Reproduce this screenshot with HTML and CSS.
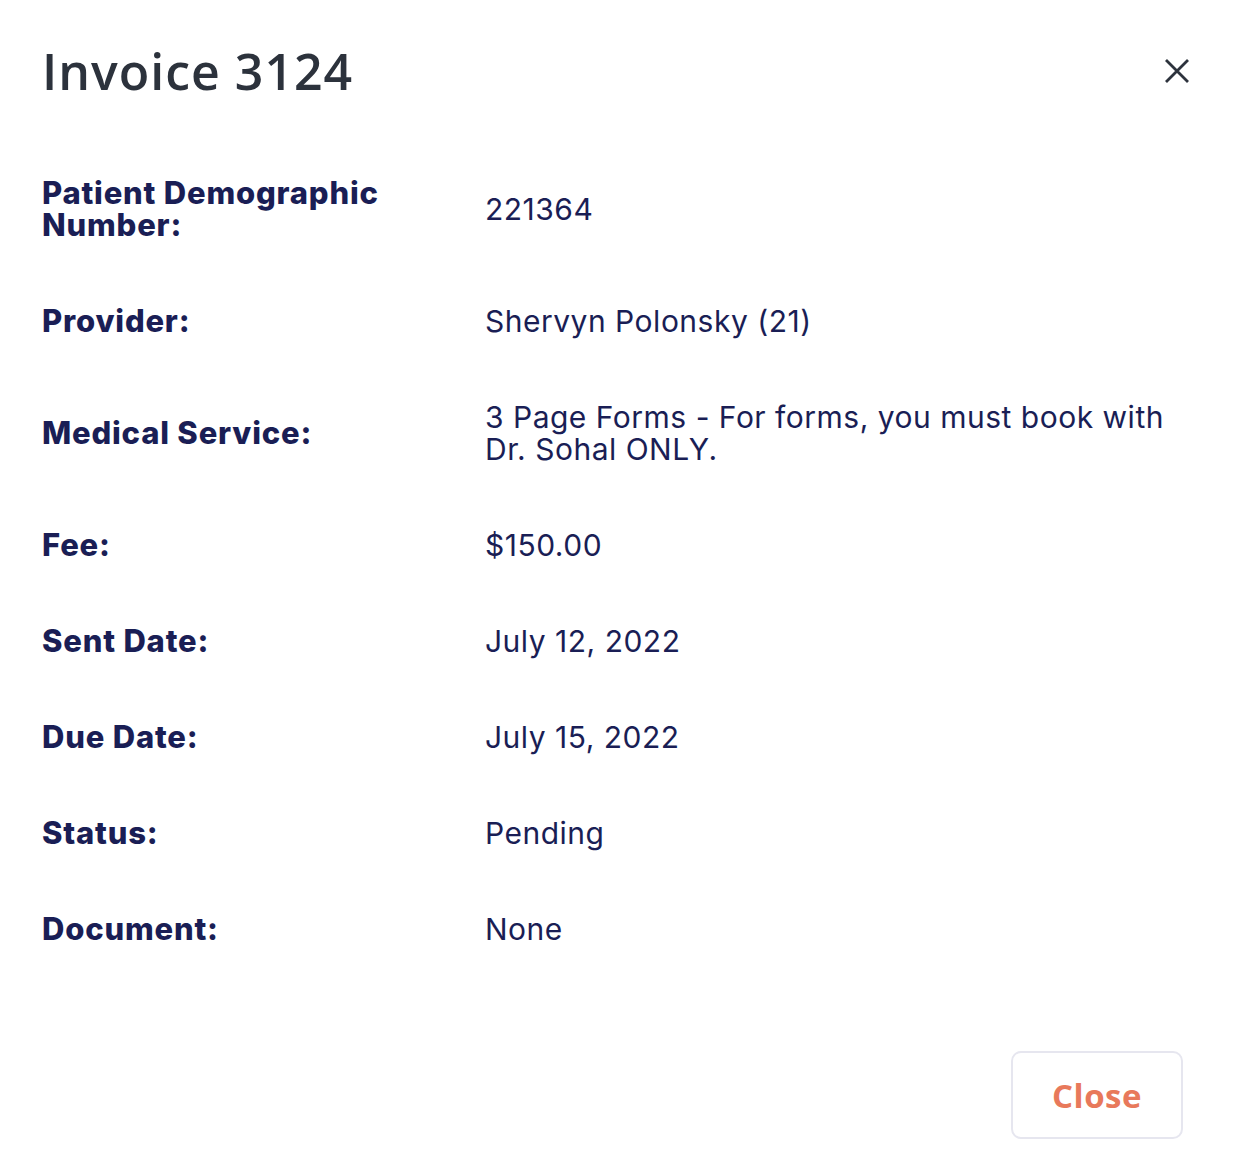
FILE: index.html
```html
<!DOCTYPE html>
<html lang="en">
<head>
<meta charset="utf-8">
<title>Invoice 3124</title>
<link rel="stylesheet" href="styles.css">
</head>
<body>
<div class="modal">
  <div class="header">
    <h1 class="title">Invoice 3124</h1>
    <button class="icon-close" aria-label="Close">
      <svg width="26" height="26" viewBox="0 0 26 26"><path d="M2 2 L24 24 M24 2 L2 24" stroke="#2d333d" stroke-width="2.8" stroke-linecap="butt" fill="none"/></svg>
    </button>
  </div>
  <div class="details">
    <div class="row"><div class="label">Patient Demographic Number:</div><div class="value">221364</div></div>
    <div class="row"><div class="label">Provider:</div><div class="value">Shervyn Polonsky (21)</div></div>
    <div class="row"><div class="label">Medical Service:</div><div class="value">3 Page Forms - For forms, you must book with Dr. Sohal ONLY.</div></div>
    <div class="row"><div class="label">Fee:</div><div class="value">$150.00</div></div>
    <div class="row"><div class="label">Sent Date:</div><div class="value">July 12, 2022</div></div>
    <div class="row"><div class="label">Due Date:</div><div class="value">July 15, 2022</div></div>
    <div class="row"><div class="label">Status:</div><div class="value">Pending</div></div>
    <div class="row"><div class="label">Document:</div><div class="value">None</div></div>
  </div>
  <div class="footer">
    <button class="btn-close">Close</button>
  </div>
</div>
</body>
</html>
```

FILE: styles.css
```css
html, body {
  margin: 0;
  padding: 0;
  background: #ffffff;
}

body {
  font-family: Inter, "Noto Sans", sans-serif;
}

.modal {
  padding: 0 42px 0 42px;
}

.header {
  display: flex;
  justify-content: space-between;
  align-items: center;
  padding-top: 37px;
  height: 104px;
  box-sizing: border-box;
}

.title {
  margin: 0;
  font-family: "Open Sans", sans-serif;
  font-weight: 650;
  font-size: 50px;
  line-height: 60px;
  letter-spacing: 1px;
  color: #2c323c;
}

.icon-close {
  border: 0;
  background: none;
  padding: 0;
  margin-right: 2px;
  margin-top: 0;
  width: 26px;
  height: 26px;
  display: flex;
}

.details {
  padding-top: 41px;
}

.row {
  display: grid;
  grid-template-columns: 411px 1fr;
  column-gap: 32px;
  align-items: center;
  padding: 32px 0;
}

.label {
  font-weight: 800;
  font-size: 31px;
  line-height: 32px;
  letter-spacing: 0.8px;
  color: #1a1e55;
}

.value {
  font-weight: 400;
  font-size: 30px;
  line-height: 32px;
  letter-spacing: 0.5px;
  color: #1a1e55;
}

.footer {
  display: flex;
  justify-content: flex-end;
  padding-top: 74px;
  padding-right: 9px;
}

.btn-close {
  width: 172px;
  height: 88px;
  box-sizing: border-box;
  border: 2px solid #e6e6ef;
  border-radius: 10px;
  background: #ffffff;
  font-family: "Open Sans", sans-serif;
  font-weight: 700;
  font-size: 33px;
  letter-spacing: 0.5px;
  color: #e8795b;
  padding: 0;
}
```
